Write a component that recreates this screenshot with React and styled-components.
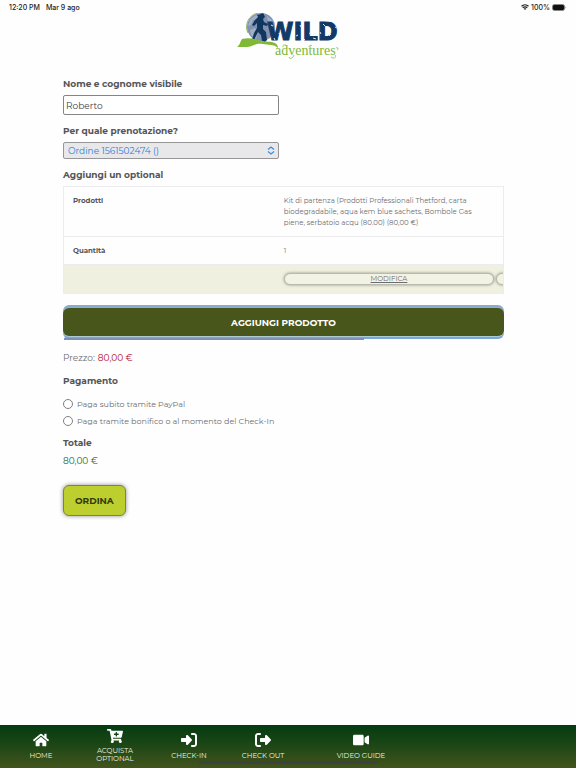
import React, { useState } from 'react';
import styled, { createGlobalStyle } from 'styled-components';
import { FaHome, FaCartPlus, FaVideo } from 'react-icons/fa';
import { FaRightToBracket, FaRightFromBracket } from 'react-icons/fa6';

const GlobalStyle = createGlobalStyle`
  * {
    box-sizing: border-box;
  }

  body {
    margin: 0;
    background: #fefefe;
    color: #6c6c70;
    font-family: Montserrat, Inter, sans-serif;
    font-size: 9px;
  }

  button, input, select {
    font-family: inherit;
    margin: 0;
  }
`;

const Page = styled.div`
  display: flex;
  flex-direction: column;
  min-height: 100vh;
`;

const StatusBar = styled.header`
  display: flex;
  align-items: center;
  gap: 6px;
  height: 13px;
  padding: 1px 9px 0;
  color: #222;
  font-family: Inter, sans-serif;
  font-size: 7px;
  font-weight: 500;
`;

const StatusRight = styled.div`
  display: flex;
  align-items: center;
  gap: 2px;
  margin-left: auto;
`;

const LogoLink = styled.a`
  align-self: center;
  height: 48px;
  margin-bottom: 16px;
`;

const Form = styled.form`
  display: flex;
  flex-direction: column;
  flex: 1;
  align-items: flex-start;
  padding: 0 72px 20px 63px;
`;

const Label = styled.label`
  margin-bottom: 4px;
  color: #555558;
  font-size: 9px;
  font-weight: 700;
  line-height: 14px;
`;

const TextInput = styled.input`
  width: 49%;
  height: 20px;
  margin-bottom: 9px;
  padding: 0 2px;
  border: 1px solid #858585;
  border-radius: 2px;
  background: #fff;
  color: #3a3a3e;
  font-size: 9px;
`;

const SelectWrap = styled.div`
  display: flex;
  align-items: center;
  width: 49%;
  height: 17px;
  margin-bottom: 9px;
  border: 1px solid #969699;
  border-radius: 2px;
  background: #e8e8ea;
`;

const Select = styled.select`
  flex: 1;
  min-width: 0;
  height: 15px;
  padding: 0 4px;
  border: 0;
  background: transparent;
  color: #2a80dc;
  font-size: 9px;
  appearance: none;
`;

const Arrows = styled.svg`
  flex: none;
  width: 8px;
  height: 9px;
  margin-right: 3px;
  pointer-events: none;
`;

const Table = styled.table`
  width: 100%;
  margin-bottom: 11px;
  border: 1px solid #ececee;
  border-collapse: collapse;
  table-layout: fixed;
  font-size: 7px;
  line-height: 11px;
`;

const Row = styled.tr`
  border-bottom: 1px solid ${(props) => (props.$tinted ? '#eff0df' : '#ececee')};
  background: ${(props) => (props.$tinted ? '#eff0df' : 'transparent')};
`;

const HeadCell = styled.th`
  width: 48%;
  padding: 8px 9px;
  color: #555558;
  font-weight: 700;
  text-align: left;
  vertical-align: top;
`;

const Cell = styled.td`
  padding: 8px 16px 8px 9px;
  vertical-align: top;
`;

const ActionCell = styled.td`
  padding: 8px 0 8px 9px;
  overflow: hidden;
`;

const Actions = styled.div`
  display: flex;
  gap: 2px;
`;

const RowButton = styled.button`
  flex: 0 0 96%;
  height: 12px;
  padding: 0;
  border: 1px solid #b9baad;
  border-radius: 6px;
  background: #f2f3e3;
  box-shadow: 0 0 3px rgba(0, 0, 0, 0.4);
  color: #6c6c70;
  font-size: 7px;
  line-height: 10px;
  text-decoration: underline;
`;

const AddButton = styled.button`
  width: 100%;
  height: 28px;
  margin: 3px 0 0;
  border: 0;
  border-radius: 6px;
  background: #48561b;
  box-shadow: 0 -1px 0 #92b3b5, 0 1px 0 #a9cbd2, 0 -3px 0 #8baad0, 0 3px 0 #7ca5dc;
  color: #fff;
  font-size: 9px;
  font-weight: 700;
`;

const Progress = styled.div`
  width: 68%;
  height: 2px;
  margin: 2px 0 11px 1px;
  background: #8290b6;
`;

const Price = styled.p`
  display: flex;
  gap: 3px;
  margin: 0 0 9px;
  font-size: 9px;
  line-height: 14px;
`;

const Amount = styled.span`
  color: ${(props) => (props.$total ? '#226d3c' : '#b2122f')};
`;

const Fieldset = styled.fieldset`
  display: flex;
  flex-direction: column;
  margin: 0 0 7px;
  padding: 0;
  border: 0;
`;

const Legend = styled.legend`
  margin-bottom: 7px;
  padding: 0;
  color: #555558;
  font-size: 9px;
  font-weight: 700;
  line-height: 14px;
`;

const RadioLabel = styled.label`
  display: flex;
  align-items: center;
  gap: 4px;
  height: 17px;
  font-size: 8px;
`;

const Radio = styled.input`
  width: 10px;
  height: 10px;
  border: 1px solid #808083;
  border-radius: 50%;
  background: #fff;
  appearance: none;

  &:checked {
    border: 3px solid #3a8de0;
  }
`;

const OrderButton = styled.button`
  height: 31px;
  margin-top: 8px;
  padding: 0 11px;
  border: 1px solid #7b8a2c;
  border-radius: 6px;
  background: #bccf2e;
  box-shadow: 0 0 4px rgba(0, 0, 0, 0.45);
  color: #323a12;
  font-size: 9px;
  font-weight: 700;
`;

const BottomNav = styled.nav`
  position: relative;
  display: flex;
  height: 43px;
  padding-left: 4px;
  background: linear-gradient(#043c11, #1c4616 45%, #43541c);
`;

const NavLink = styled.a`
  display: flex;
  flex: 0 1 ${(props) => (props.$wide ? '122px' : '74px')};
  flex-direction: column;
  align-items: center;
  gap: ${(props) => (props.$twoLines ? '3px' : '4px')};
  padding-top: ${(props) => (props.$twoLines ? '3px' : '7px')};
  color: #eef4e6;
  font-size: 7px;
  line-height: 8px;
  text-align: center;
  text-decoration: none;
  text-transform: uppercase;

  svg {
    flex: none;
    color: #fff;
    font-size: 16px;
  }
`;

const HomeIndicator = styled.div`
  position: absolute;
  bottom: 4px;
  left: 50%;
  width: 31%;
  height: 3px;
  border-radius: 2px;
  background: #3f4044;
  transform: translateX(-50%);
`;

const links = [
  { label: 'Home', icon: <FaHome /> },
  { label: 'Acquista optional', icon: <FaCartPlus />, twoLines: true },
  { label: 'Check-in', icon: <FaRightToBracket /> },
  { label: 'Check out', icon: <FaRightFromBracket /> },
  { label: 'Video guide', icon: <FaVideo />, wide: true },
];

const Logo = () => (
  <svg width="104" height="48" viewBox="0 0 104 48" role="img" aria-label="Wild adventures">
    <circle cx="25" cy="14" r="14" fill="#8193b2" />
    <path d="M14 7c3-4 8-6 11-5l-3 4-5 1-2 5-3 1zM14 17l5-2 3 4-2 7-5-4zM31 3l6 5-1 4-4-3z" fill="#a3afc6" />
    <path d="M22 0a14 14 0 0 0-10 20" fill="none" stroke="#91b565" />
    {/* climber */}
    <path d="M25 1c1-1 3-1 3 1l1 2-2 2 1 3 4 2-1 2-4-1 0 4 3 3 1 8-2 2-3-1-1-6-3-3-2 4-2 4-2 0 2-7 3-5 0-5-3 3-2-1 3-5 3-3-1-2z" fill="#12375f" />
    <path d="M1 34c3-2 3-5 5-8 7-2 13 0 19 2 5 1 10 0 14 2 2 1 3 3 3 5-4-4-10-3-15-4-8-1-12 3-16 3z" fill="#80b936" />
    <text
      x="31"
      y="27"
      fill="#123a67"
      stroke="#123a67"
      strokeWidth="1"
      fontFamily="DejaVu Sans, sans-serif"
      fontSize="24"
      fontWeight="700"
    >
      WILD
    </text>
    <path d="M35 12l2 1M43 20l1 3M50 11l1 2M60 23l2-1M64 12l1 2M73 20l2 1M77 25l3 1M87 11l2 2M93 23l2-2M99 14l2 1M68 27l1-1M38 25l1 2M84 19l1 2" stroke="#dfe5ec" strokeWidth="1" />
    <text x="39" y="42" fill="#80b936" fontFamily="Liberation Serif, serif" fontSize="14">adventures</text>
    <path d="M51 33c-2-2-5-1-4 1M58 42c-1 4-5 4-5 2M76 33c-1-1-3-1-3 1M101 37c2-1 1-3-1-2M99 42c2 3-2 4-4 2" fill="none" stroke="#80b936" strokeWidth="0.8" />
  </svg>
);

const App = () => {
  const [name, setName] = useState('Roberto');

  return (
    <Page>
      <GlobalStyle />
      <StatusBar>
        <span>12:20 PM</span>
        <span>Mar 9 ago</span>
        <StatusRight>
          <svg width="8" height="6" viewBox="0 0 16 12" fill="none" stroke="#222" strokeWidth="2.4">
            <path d="M1 4.5c4-4 10-4 14 0M3.5 7.500c3-2.500 6-2.500 9 0" />
            <path d="M8 12L5.500 9.500c1.500-1.200 3.500-1.200 5 0z" fill="#222" stroke="none" />
          </svg>
          <span>100%</span>
          <svg width="15" height="7" viewBox="0 0 15 7">
            <rect x="0.5" y="0.5" width="12" height="6" rx="2" fill="#111" stroke="#888" />
            <path d="M13.500 2.500c1 .5 1 1.500 0 2z" fill="#888" />
          </svg>
        </StatusRight>
      </StatusBar>

      <LogoLink href="#home">
        <Logo />
      </LogoLink>

      <Form onSubmit={(e) => e.preventDefault()}>
        <Label htmlFor="name">Nome e cognome visibile</Label>
        <TextInput id="name" value={name} onChange={(e) => setName(e.target.value)} />

        <Label htmlFor="booking">Per quale prenotazione?</Label>
        <SelectWrap>
          <Select id="booking">
            <option>Ordine 1561502474 ()</option>
          </Select>
          <Arrows viewBox="0 0 8 9" fill="none" stroke="#3a8de0" strokeWidth="1.2">
            <path d="M1 3.500L4 1l3 2.500M1 5.500L4 8l3-2.500" />
          </Arrows>
        </SelectWrap>

        <Label as="div" id="optional">Aggiungi un optional</Label>
        <Table aria-labelledby="optional">
          <tbody>
            <Row>
              <HeadCell scope="row">Prodotti</HeadCell>
              <Cell>
                Kit di partenza (Prodotti Professionali Thetford, carta biodegradabile, aqua kem blue
                sachets, Bombole Gas piene, serbatoio acqu (80.00) (80,00 €)
              </Cell>
            </Row>
            <Row>
              <HeadCell scope="row">Quantità</HeadCell>
              <Cell>1</Cell>
            </Row>
            <Row $tinted>
              <td />
              <ActionCell>
                <Actions>
                  <RowButton type="button">MODIFICA</RowButton>
                  <RowButton type="button" aria-label="Elimina" />
                </Actions>
              </ActionCell>
            </Row>
          </tbody>
        </Table>

        <AddButton type="button">AGGIUNGI PRODOTTO</AddButton>
        <Progress />

        <Price>
          Prezzo: <Amount>80,00 €</Amount>
        </Price>

        <Fieldset>
          <Legend>Pagamento</Legend>
          <RadioLabel>
            <Radio type="radio" name="payment" value="paypal" />
            Paga subito tramite PayPal
          </RadioLabel>
          <RadioLabel>
            <Radio type="radio" name="payment" value="transfer" />
            Paga tramite bonifico o al momento del Check-In
          </RadioLabel>
        </Fieldset>

        <Label as="div">Totale</Label>
        <Price>
          <Amount $total>80,00 €</Amount>
        </Price>

        <OrderButton type="submit">ORDINA</OrderButton>
      </Form>

      <BottomNav>
        {links.map((link) => (
          <NavLink key={link.label} href="#" $wide={link.wide} $twoLines={link.twoLines}>
            {link.icon}
            {link.label}
          </NavLink>
        ))}
        <HomeIndicator />
      </BottomNav>
    </Page>
  );
};

export default App;
